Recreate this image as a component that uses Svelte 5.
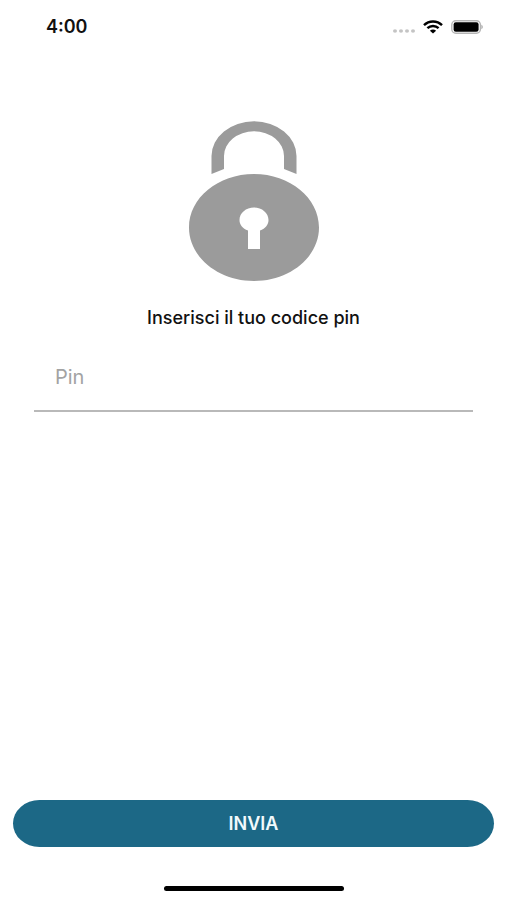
<script>
  let pin = $state('');
</script>

<div class="screen">
  <header class="status">
    <time>4:00</time>
    <div class="indicators">
      <svg width="22" height="4" viewBox="0 0 22 4" fill="#c4c4c4" aria-hidden="true">
        <ellipse cx="2" cy="2" rx="2" ry="1.7" />
        <ellipse cx="8" cy="2" rx="2" ry="1.7" />
        <ellipse cx="14" cy="2" rx="2" ry="1.7" />
        <ellipse cx="20" cy="2" rx="2" ry="1.7" />
      </svg>
      <svg width="20" height="14" viewBox="0 0 20 14" aria-hidden="true">
        <g fill="none" stroke="#000" stroke-width="2.4">
          <path d="M1 5.2C6 .2 14 .2 19 5.2" />
          <path d="M4.4 8.2C7.5 5.2 12.5 5.2 15.6 8.2" />
        </g>
        <path d="M6.9 10.7C8.7 9.2 11.3 9.2 13.1 10.7L10 13.4Z" />
      </svg>
      <svg width="32" height="14" viewBox="0 0 32 14" aria-hidden="true">
        <rect x="0.8" y="0.8" width="28.6" height="12.4" rx="4" fill="#fff" stroke="#b5b5b5" stroke-width="1.4" />
        <rect x="2.6" y="2.2" width="25" height="9.6" rx="2.2" />
        <path d="M30.4 4.8C32.2 5.5 32.2 8.5 30.4 9.2Z" fill="#aaa" />
      </svg>
    </div>
  </header>

  <main>
    <svg class="lock" width="130" height="160" viewBox="0 0 130 160" fill="#9b9b9b" aria-hidden="true">
      <path d="M22.5 53V35A42.5 34.7 0 0 1 107.500 35V53L95 48V35A30 24.700 0 0 0 35 35V48Z" />
      <path fill-rule="evenodd" d="M65 53C101 53 130 77 130 106.500S101 160 65 160 0 136 0 106.500 29 53 65 53ZM59 128H71V109.500C76.500 107.500 79.500 103.500 79.500 99C79.500 92 73 86.500 65 86.500S50.500 92 50.500 99C50.500 103.500 53.500 107.500 59 109.500Z" />
    </svg>
    <label for="pin">Inserisci il tuo codice pin</label>
    <input id="pin" type="text" inputmode="numeric" placeholder="Pin" bind:value={pin} />
  </main>

  <footer>
    <button type="button">INVIA</button>
    <div class="home"></div>
  </footer>
</div>

<style>
  :global(body) {
    margin: 0;
    background: #fff;
  }
  .screen {
    box-sizing: border-box;
    min-height: 100vh;
    display: flex;
    flex-direction: column;
    background: #fff;
    color: #111;
    font-family: Inter, "Liberation Sans", sans-serif;
  }
  .status {
    display: flex;
    align-items: center;
    justify-content: space-between;
    height: 24px;
    padding: 15px 24px 0 46px;
  }
  time {
    font-size: 18px;
    line-height: 24px;
    font-weight: 600;
  }
  .indicators {
    display: flex;
    align-items: center;
    gap: 8px;
  }
  .indicators > :first-child {
    margin-top: 8px;
  }
  main {
    flex: 1;
    display: flex;
    flex-direction: column;
    align-items: center;
    padding: 82px 34px 0;
  }
  .lock {
    display: block;
  }
  label {
    margin-top: 25px;
    font-size: 18px;
    line-height: 24px;
    font-weight: 500;
  }
  input {
    box-sizing: border-box;
    width: 100%;
    height: 68px;
    margin-top: 14px;
    padding: 0 21px;
    border: 0;
    border-bottom: 2px solid #b9b9b9;
    border-radius: 0;
    background: none;
    color: #111;
    font: 400 20px/24px Inter, "Liberation Sans", sans-serif;
    outline: none;
  }
  input::placeholder {
    color: #a3a3a3;
    opacity: 1;
  }
  footer {
    display: flex;
    flex-direction: column;
    align-items: center;
    gap: 39px;
    padding: 0 13px 9px;
  }
  button {
    width: 100%;
    height: 47px;
    padding: 0;
    border: 0;
    border-radius: 27px / 24px;
    background: #1c6886;
    color: #f2fafc;
    font: 600 18px/24px Inter, "Liberation Sans", sans-serif;
    cursor: pointer;
  }
  .home {
    width: 180px;
    height: 5px;
    border-radius: 3px;
    background: #000;
  }
</style>
